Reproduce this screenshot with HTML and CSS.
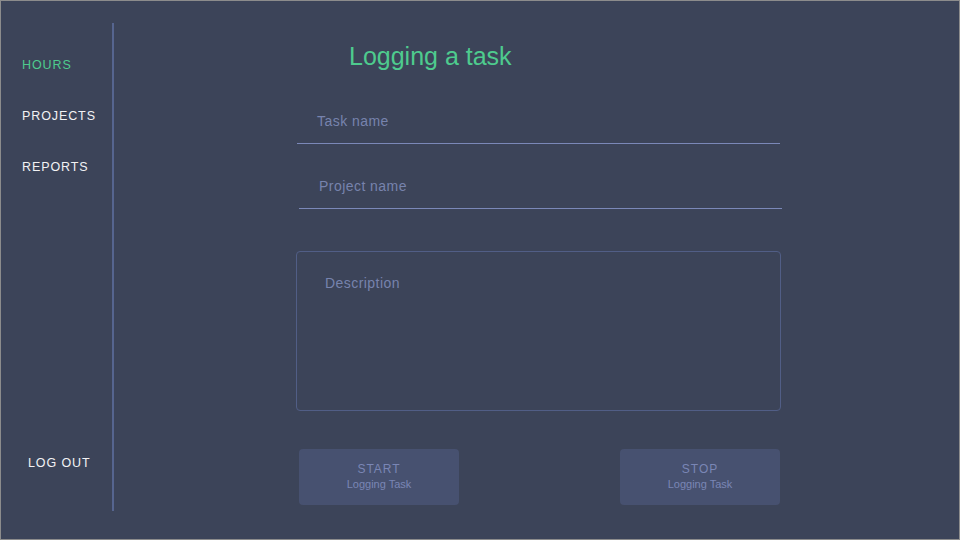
FILE: index.html
```html
<!DOCTYPE html>
<html>
<head>
<meta charset="utf-8">
<link rel="stylesheet" href="styles.css">
</head>
<body>
<div class="app">
  <aside class="sidebar">
    <nav class="nav">
      <a class="nav-item active">HOURS</a>
      <a class="nav-item">PROJECTS</a>
      <a class="nav-item">REPORTS</a>
    </nav>
    <a class="logout">LOG OUT</a>
  </aside>
  <main class="main">
    <h1 class="title">Logging a task</h1>
    <div class="field field-task"><span class="placeholder">Task name</span></div>
    <div class="field field-project"><span class="placeholder">Project name</span></div>
    <div class="desc"><span class="placeholder">Description</span></div>
    <div class="buttons">
      <button class="btn"><span class="btn-main">START</span><span class="btn-sub">Logging Task</span></button>
      <button class="btn"><span class="btn-main">STOP</span><span class="btn-sub">Logging Task</span></button>
    </div>
  </main>
</div>
</body>
</html>
```

FILE: styles.css
```css
* { box-sizing: border-box; }
html, body { margin: 0; padding: 0; }
body {
  font-family: "Liberation Sans", Arial, sans-serif;
  background: #3c4459;
}
.app {
  width: 960px;
  height: 540px;
  border: 1px solid #8c8c8c;
  background: #3c4459;
  display: flex;
}
.sidebar {
  width: 113px;
  margin-top: 22px;
  height: 488px;
  border-right: 2px solid #56658f;
  display: flex;
  flex-direction: column;
  padding-top: 17px;
  padding-bottom: 22px;
}
.nav { display: flex; flex-direction: column; }
.nav-item {
  height: 51px;
  line-height: 51px;
  padding-left: 21px;
  font-size: 12.5px;
  letter-spacing: 0.9px;
  color: #f2f2f4;
}
.nav-item.active { color: #4ecb8e; }
.logout {
  margin-top: auto;
  padding-left: 27px;
  height: 51px;
  line-height: 51px;
  font-size: 12.5px;
  letter-spacing: 0.9px;
  color: #f2f2f4;
}
.main {
  flex: 1;
  padding-left: 183px;
  padding-top: 40px;
  display: flex;
  flex-direction: column;
  align-items: flex-start;
}
.title {
  margin: 0 0 0 52px;
  font-size: 25px;
  line-height: 30px;
  font-weight: normal;
  color: #4ecb8e;
}
.placeholder {
  font-size: 14px;
  letter-spacing: 0.45px;
  color: #7783ad;
}
.field {
  width: 483px;
  height: 46px;
  border-bottom: 1px solid #7b88b8;
  display: flex;
  align-items: center;
  padding-left: 20px;
}
.field-task { margin-top: 27px; }
.field-project { margin-top: 19px; margin-left: 2px; }
.desc {
  margin-top: 42px;
  margin-left: -1px;
  width: 485px;
  height: 160px;
  border: 1.5px solid #515e86;
  border-radius: 4px;
  padding: 23px 0 0 28px;
  line-height: 16px;
}
.buttons {
  margin-top: 38px;
  margin-left: 2px;
  width: 481px;
  display: flex;
  justify-content: space-between;
}
.btn {
  width: 160px;
  height: 56px;
  border: none;
  border-radius: 4px;
  background: #475170;
  color: #7a86b5;
  font-family: "Liberation Sans", Arial, sans-serif;
  display: flex;
  flex-direction: column;
  align-items: center;
  justify-content: center;
  padding: 0;
}
.btn-main {
  font-size: 12px;
  letter-spacing: 1px;
  line-height: 15px;
  margin-top: -2px;
}
.btn-sub {
  font-size: 11px;
  line-height: 14px;
}
```
